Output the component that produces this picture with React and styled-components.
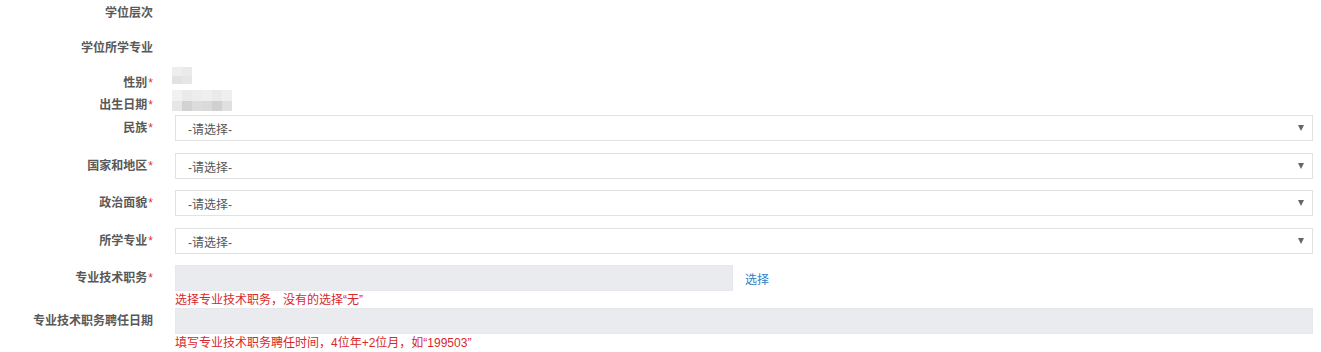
import React from "react";
import styled, { createGlobalStyle } from "styled-components";

const Global = createGlobalStyle`
  html, body { margin: 0; padding: 0; background: #fff; }
  body {
    font-family: "Liberation Sans", "Noto Sans CJK SC", "Microsoft YaHei", sans-serif;
    font-size: 12px;
    color: #555;
  }
  * { box-sizing: border-box; }
`;

const Form = styled.div`
  display: flex;
  flex-direction: column;
  width: 1321px;
  padding-right: 8px;
`;

const Row = styled.div`
  display: flex;
  align-items: ${(p) => p.$align || "center"};
  height: ${(p) => (p.$h ? `${p.$h}px` : "auto")};
  margin-top: ${(p) => p.$mt || 0}px;
  column-gap: 22px;
`;

const Label = styled.div`
  flex: 0 0 153px;
  text-align: right;
  font-weight: 700;
  color: #595959;
  white-space: nowrap;
  line-height: ${(p) => p.$lh || 20}px;
  padding-top: ${(p) => p.$pt || 0}px;
`;

const Star = styled.span`
  color: #d9343a;
  font-weight: 400;
  margin-left: 1px;
`;

const Field = styled.div`
  flex: 1;
  display: flex;
  flex-direction: column;
  min-width: 0;
`;

const InputLine = styled.div`
  display: flex;
  align-items: center;
  gap: 12px;
`;

const Mosaic = styled.div`
  display: grid;
  grid-template-columns: repeat(${(p) => p.$cols}, 10px);
  grid-auto-rows: ${(p) => p.$rowH || 9}px;
  margin-left: -3px;
  filter: blur(0.6px);
`;

const Cell = styled.div`
  background: ${(p) => p.$c};
`;

const SelectBox = styled.div`
  height: 26px;
  display: flex;
  align-items: center;
  justify-content: space-between;
  padding: 0 8px 0 12px;
  border: 1px solid #e2e2e2;
  background: #fff;
  color: #555;
  cursor: pointer;
`;

const Caret = styled.span`
  width: 0;
  height: 0;
  border-left: 3.5px solid transparent;
  border-right: 3.5px solid transparent;
  border-top: 6px solid #666;
`;

const GrayInput = styled.input`
  height: 26px;
  width: ${(p) => (p.$w ? `${p.$w}px` : "100%")};
  border: 1px solid #e6e8eb;
  background: #e9ebee;
  padding: 0 12px;
  font: inherit;
  outline: none;
`;

const Link = styled.a`
  color: #2c7fc5;
  text-decoration: none;
  cursor: pointer;
`;

const Hint = styled.div`
  color: #d9282c;
  line-height: 16px;
  height: ${(p) => p.$h || 17}px;
  padding-top: 1px;
`;

const genderCells = ["#eeeeee", "#eaeaea", "#e2e2e2", "#e6e6e6"];
const birthCells = [
  "#f1f1f1", "#eaeaea", "#ededed", "#efefef", "#eaeaea", "#efefef",
  "#e6e6e6", "#d2d2d2", "#dcdcdc", "#dadada", "#d0d0d0", "#e0e0e0",
];

const selects = [
  { label: "民族", mt: 0 },
  { label: "国家和地区", mt: 12 },
  { label: "政治面貌", mt: 11 },
  { label: "所学专业", mt: 12 },
];

export default function App() {
  return (
    <>
      <Global />
      <Form>
        <Row $h={25}>
          <Label>学位层次</Label>
        </Row>
        <Row $h={24} $mt={11}>
          <Label>学位所学专业</Label>
        </Row>
        <Row $h={23} $mt={7} $align="flex-start">
          <Label $pt={6} $lh={20}>
            性别<Star>*</Star>
          </Label>
          <Field>
            <Mosaic $cols={2} $rowH={8.5}>
              {genderCells.map((c, i) => (
                <Cell key={i} $c={c} />
              ))}
            </Mosaic>
          </Field>
        </Row>
        <Row $h={25} $align="flex-start">
          <Label $pt={5} $lh={20}>
            出生日期<Star>*</Star>
          </Label>
          <Field>
            <Mosaic $cols={6} $rowH={10.5}>
              {birthCells.map((c, i) => (
                <Cell key={i} $c={c} />
              ))}
            </Mosaic>
          </Field>
        </Row>
        {selects.map((s) => (
          <Row key={s.label} $mt={s.mt}>
            <Label $lh={26}>
              {s.label}
              <Star>*</Star>
            </Label>
            <Field>
              <SelectBox role="combobox">
                <span>-请选择-</span>
                <Caret />
              </SelectBox>
            </Field>
          </Row>
        ))}
        <Row $mt={11} $align="flex-start">
          <Label $lh={26}>
            专业技术职务<Star>*</Star>
          </Label>
          <Field>
            <InputLine>
              <GrayInput $w={558} disabled />
              <Link>选择</Link>
            </InputLine>
            <Hint>选择专业技术职务，没有的选择“无”</Hint>
          </Field>
        </Row>
        <Row $align="flex-start">
          <Label $lh={26}>专业技术职务聘任日期</Label>
          <Field>
            <GrayInput disabled />
            <Hint $h={18}>填写专业技术职务聘任时间，4位年+2位月，如“199503”</Hint>
          </Field>
        </Row>
      </Form>
    </>
  );
}
